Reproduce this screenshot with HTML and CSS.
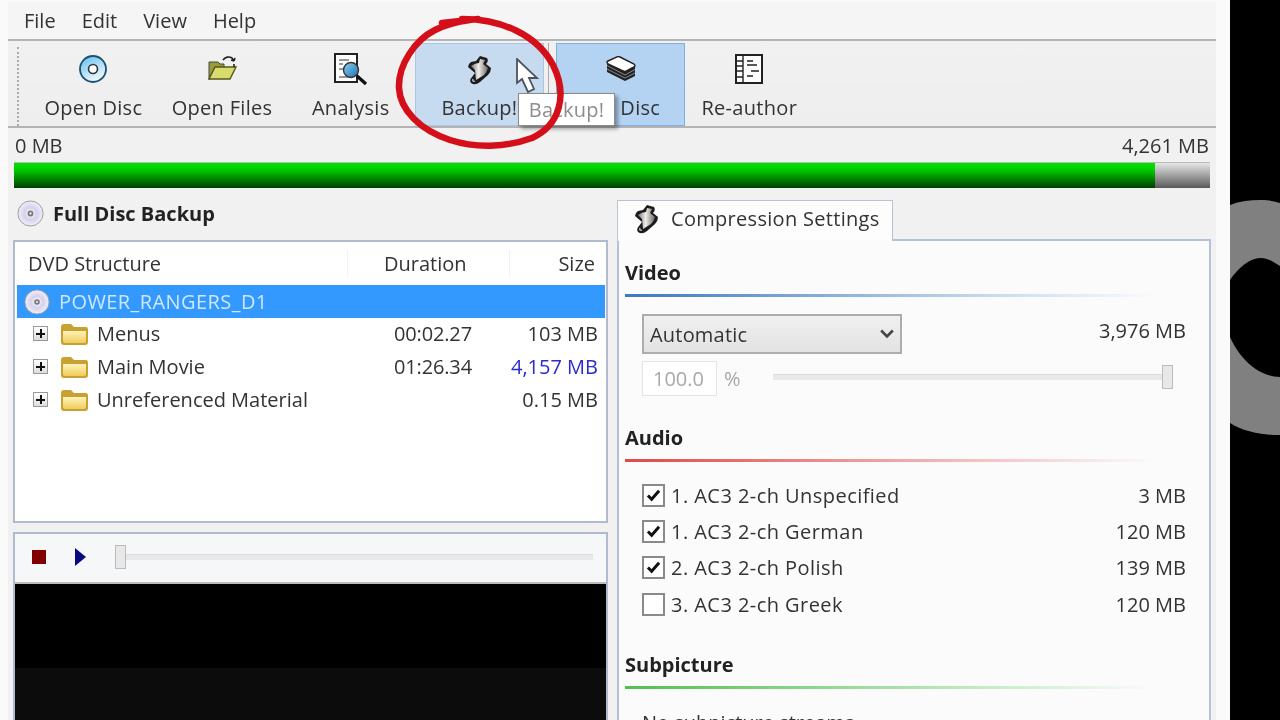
FILE: index.html
```html
<!DOCTYPE html>
<html lang="en">
<head>
<meta charset="utf-8">
<title>DVD Backup</title>
<link rel="stylesheet" href="styles.css">
</head>
<body>
<svg class="defs" width="0" height="0" aria-hidden="true">
  <defs>
    <linearGradient id="folderFill" x1="0" y1="0" x2="0" y2="1"><stop offset="0" stop-color="#fff3b8"/><stop offset="1" stop-color="#f0cc5e"/></linearGradient>
    <linearGradient id="scrollFill" x1="0" y1="0" x2="1" y2="0"><stop offset="0" stop-color="#777"/><stop offset=".45" stop-color="#f0efed"/><stop offset="1" stop-color="#6d655f"/></linearGradient>
    <linearGradient id="discBlue" x1="0" y1="0" x2=".5" y2="1"><stop offset="0" stop-color="#5fbdf0"/><stop offset=".6" stop-color="#b5e0f8"/><stop offset="1" stop-color="#f0f9ff"/></linearGradient>
    <linearGradient id="lens" x1="0" y1="0" x2="1" y2="1"><stop offset="0" stop-color="#8fd0f4"/><stop offset="1" stop-color="#1a6fae"/></linearGradient>
    <radialGradient id="discFill"><stop offset="0" stop-color="#fff"/><stop offset=".5" stop-color="#d6d0ee"/><stop offset="1" stop-color="#f2f0fa"/></radialGradient>
    <symbol id="scroll" viewBox="0 0 24 30">
      <path d="M13 1L20 3Q22 6 19 9L24 13Q24 17 21 20L13 27Q8 31 4 28Q2 25 5 22L8 18 1 12Q1 9 4 7L9 6Z" fill="#1c1c1c"/>
      <path d="M13 4L18 5 16 9 21 13Q20 17 17 20L9 25 8 15 4 11Q8 8 12 8Z" fill="url(#scrollFill)"/>
      <path d="M6 24Q5 27 8 26" fill="none" stroke="#ddd" stroke-width="1.2"/>
    </symbol>
    <symbol id="folder" viewBox="0 0 29 24">
      <path d="M1 5Q1 2 4 2H11L14 5H26Q28 5 28 8V20Q28 23 25 23H4Q1 23 1 20Z" fill="#c9a032"/>
      <path d="M3 9H26V19Q26 21 24 21H5Q3 21 3 19Z" fill="url(#folderFill)"/>
    </symbol>
    <symbol id="disc" viewBox="0 0 28 28">
      <circle cx="14" cy="14" r="13" fill="url(#discFill)" stroke="#9a9a9a"/>
      <circle cx="14" cy="14" r="3" fill="#777"/>
      <circle cx="14" cy="14" r="1.2" fill="#eee"/>
    </symbol>
    <symbol id="tick" viewBox="0 0 16 14">
      <path d="M2 7l4 4 8-9" fill="none" stroke="#111" stroke-width="3.2"/>
    </symbol>
  </defs>
</svg>
<div class="stage">
  <div class="app">
    <div class="window">
      <nav class="menubar">
        <span class="menu-item">File</span><span class="menu-item">Edit</span><span class="menu-item">View</span><span class="menu-item">Help</span>
      </nav>
      <div class="toolbar">
        <div class="grip"></div>
        <div class="tool">
          <svg class="tool-icon" viewBox="0 0 32 32"><circle cx="16" cy="16" r="13" fill="url(#discBlue)" stroke="#1d4f70" stroke-width="1.8"/><circle cx="16" cy="16" r="4.5" fill="#fff" stroke="#333" stroke-width="1.6"/></svg>
          <span>Open Disc</span>
        </div>
        <div class="tool">
          <svg class="tool-icon" viewBox="0 0 32 32"><path d="M3 9h9l2 2h4v4H9L5 26H3z" fill="#9a9c3a" stroke="#444" stroke-width="1"/><path d="M9 14h21l-6 12H3z" fill="#d8dc6c" stroke="#55551c" stroke-width="1.4"/><path d="M17 7c2-3 6-4 9-2 1 1 2 2 2 3M28 8l-3-1M28 8l1-3M28 11v3" fill="none" stroke="#222" stroke-width="1.6"/></svg>
          <span>Open Files</span>
        </div>
        <div class="tool">
          <svg class="tool-icon lens-icon" viewBox="0 0 36 34"><rect x="2" y="2" width="22" height="28" fill="#fff" stroke="#222" stroke-width="2"/><path d="M6 8h10M6 12h4M6 17h4M6 25h10" stroke="#777" stroke-width="1.5"/><circle cx="18" cy="18" r="7.5" fill="url(#lens)" stroke="#333" stroke-width="1.4"/><path d="M24 24l9 8" stroke="#111" stroke-width="3.2"/></svg>
          <span>Analysis</span>
        </div>
        <div class="tool tool-hover">
          <svg class="tool-icon scroll-icon"><use href="#scroll"/></svg>
          <span>Backup!</span>
        </div>
        <div class="sep"></div>
        <div class="tool tool-active">
          <svg class="tool-icon stack-icon" viewBox="0 0 30 25"><path d="M1 6V16L19 25 29 20V10L19 16Z" fill="#222"/><path d="M1 9.5L19 19 29 13.5M1 13L19 22 29 17" fill="none" stroke="#8a8a8a" stroke-width="1"/><path d="M11 1Q12 0 14 1L28 8Q30 10 28 11L20 15Q19 16 17 15L2 8Q0 6 2 5Z" fill="#fff" stroke="#222" stroke-width="1.4"/></svg>
          <span>Full Disc</span>
        </div>
        <div class="tool">
          <svg class="tool-icon" viewBox="0 0 32 32"><rect x="3" y="2" width="26" height="28" fill="#fff" stroke="#222" stroke-width="2"/><path d="M10 2v28M3 8h7M3 13h7M3 18h7M3 24h7" stroke="#222" stroke-width="1.4"/><path d="M14 8h6M14 12h10M18 18h8M14 23h6" stroke="#222" stroke-width="1.7"/></svg>
          <span>Re-author</span>
        </div>
      </div>
      <div class="size-row"><span>0 MB</span><span>4,261 MB</span></div>
      <div class="capacity"><div class="capacity-fill"></div></div>
      <div class="columns">
        <section class="left">
          <h2 class="mode"><svg class="mode-icon"><use href="#disc"/></svg>Full Disc Backup</h2>
          <div class="tree">
            <div class="tree-head">
              <span class="c-name">DVD Structure</span><span class="c-dur">Duration</span><span class="c-size">Size</span>
            </div>
            <div class="tree-root"><svg class="root-icon"><use href="#disc"/></svg>POWER_RANGERS_D1</div>
            <div class="tree-row"><span class="plus"></span><svg class="folder"><use href="#folder"/></svg><span class="c-label">Menus</span><span class="c-d">00:02.27</span><span class="c-s">103 MB</span></div>
            <div class="tree-row"><span class="plus"></span><svg class="folder"><use href="#folder"/></svg><span class="c-label">Main Movie</span><span class="c-d">01:26.34</span><span class="c-s link">4,157 MB</span></div>
            <div class="tree-row"><span class="plus"></span><svg class="folder"><use href="#folder"/></svg><span class="c-label">Unreferenced Material</span><span class="c-d"></span><span class="c-s">0.15 MB</span></div>
          </div>
          <div class="player">
            <div class="player-bar">
              <span class="stop"></span>
              <svg class="play" viewBox="0 0 12 18"><path d="M1 0L12 9 1 18z" fill="#0a0a80"/></svg>
              <div class="track seek"><span class="thumb"></span></div>
            </div>
            <div class="screen"></div>
          </div>
        </section>
        <section class="right">
          <div class="tab"><svg class="tab-icon"><use href="#scroll"/></svg>Compression Settings</div>
          <div class="panel">
            <h3 class="sec">Video</h3>
            <div class="rule rule-blue"></div>
            <div class="video-row">
              <div class="select"><span>Automatic</span><svg class="chev" viewBox="0 0 12 8"><path d="M1 1l5 5 5-5" fill="none" stroke="#444" stroke-width="2.2"/></svg></div>
              <span class="mb">3,976 MB</span>
            </div>
            <div class="quality">
              <span class="pct-box">100.0</span><span class="pct">%</span>
              <div class="track quality-track"><span class="thumb"></span></div>
            </div>
            <h3 class="sec sec-audio">Audio</h3>
            <div class="rule rule-red"></div>
            <ul class="audio">
              <li><span class="check"><svg><use href="#tick"/></svg></span><span class="audio-name">1. AC3 2-ch Unspecified</span><span>3 MB</span></li>
              <li><span class="check"><svg><use href="#tick"/></svg></span><span class="audio-name">1. AC3 2-ch German</span><span>120 MB</span></li>
              <li><span class="check"><svg><use href="#tick"/></svg></span><span class="audio-name">2. AC3 2-ch Polish</span><span>139 MB</span></li>
              <li><span class="check"></span><span class="audio-name">3. AC3 2-ch Greek</span><span>120 MB</span></li>
            </ul>
            <h3 class="sec sec-sub">Subpicture</h3>
            <div class="rule rule-green"></div>
            <p class="none">No subpicture streams</p>
          </div>
        </section>
      </div>
    </div>
    <div class="tooltip">Backup!</div>
    <svg class="cursor" viewBox="0 0 24 36"><path d="M1 1V25L6 21 12 34 18 31 13 20H21Z" fill="#fff" stroke="#4c5260" stroke-width="1.8"/></svg>
    <svg class="scribble" viewBox="0 0 180 145"><path d="M52 13L88 9M72 9C112 9 147 25 163 55 178 85 170 115 142 128 115 138 85 138 60 130 30 120 10 100 9 78 8 55 25 30 45 20 55 15 65 12 80 10" fill="none" stroke="#d40f1a" stroke-width="6.5" stroke-linecap="round"/></svg>
  </div>
  <div class="backdrop">
    <svg class="ring" viewBox="0 0 50 720"><path d="M0 205C10 201 20 200 30 200 38 200 44 201 50 203V435C30 435 12 431 0 423Z" fill="#808080"/><path d="M0 280C8 268 20 258 30 258 38 258 44 262 50 266V377C30 377 10 360 0 337Z" fill="#000"/></svg>
  </div>
</div>
</body>
</html>
```

FILE: styles.css
```css
* { box-sizing: border-box; }
html, body { margin: 0; padding: 0; }
body { width: 1280px; height: 720px; overflow: hidden; background: #000; font-family: "Open Sans", "Liberation Sans", sans-serif; font-size: 20px; color: #333; }
.defs { position: absolute; }
.stage { display: flex; width: 1280px; height: 720px; overflow: hidden; filter: blur(.45px); }
.app { position: relative; width: 1230px; height: 720px; flex: none; background: #fafafa; padding: 2px 14px 0 8px; overflow: hidden; }
.window { height: 718px; background: #f1f1f1; }
.backdrop { flex: 1; background: #000; }
.ring { display: block; width: 50px; height: 720px; }

.menubar { display: flex; height: 39px; align-items: center; padding-left: 16px; gap: 26px; background: #f5f5f5; border-bottom: 2px solid #b4b4b4; }
.toolbar { display: flex; height: 87px; align-items: stretch; background: linear-gradient(#f1f1f1, #eeeeee); border-bottom: 2px solid #b4b4b4; padding-top: 2px; }
.grip { width: 5px; margin: 4px 0 0 9px; border-left: 2px dotted #aaa; flex: none; }
.tool { display: flex; flex-direction: column; align-items: center; width: 128.7px; flex: none; padding-top: 9px; border: 1px solid transparent; letter-spacing: .3px; }
.tool span { margin-top: 10px; line-height: 26px; }
.tool-icon { width: 32px; height: 32px; display: block; flex: none; }
.lens-icon { width: 36px; height: 34px; margin: -1px 0 -1px; }
.scroll-icon { width: 24px; height: 30px; margin-top: 2px; }
.stack-icon { width: 30px; height: 25px; margin: 3px 0 4px; }
.tool-hover { background: #c6daf0; border-color: #a9c6e6; }
.tool-active { background: #b4d2f2; border-color: #7fb0e0; }
.grip + .tool { margin-left: 7px; }
.sep { width: 12.5px; background: linear-gradient(90deg, transparent 4px, #aaa 4px, #aaa 5px, transparent 5px); flex: none; }

.size-row { display: flex; justify-content: space-between; height: 34px; align-items: center; padding: 0 7px 0 7px; }
.capacity { margin: 0 6px; height: 26px; background: linear-gradient(#e6e6e6, #5a5a5a); border-top: 1px solid #bbb; }
.capacity-fill { width: 1141px; height: 100%; background: linear-gradient(#00e000, #00d000 25%, #003c00); }

.columns { display: grid; grid-template-columns: 594px 594px; column-gap: 9px; margin-left: 6px; }
.mode { display: flex; align-items: center; margin: 0; height: 52px; font-size: 20px; font-weight: 700; color: #222; padding: 0 0 2px 3px; gap: 9px; }
.mode-icon { width: 27px; height: 27px; }
.tree { height: 283px; background: #fff; border: 2px solid #b0bccd; padding: 2px 0 0 1px; margin-left: -1px; }
.tree-head { display: flex; height: 41px; align-items: center; padding: 0 11px 3px 12px; }
.c-name { width: 319px; }
.c-dur { width: 163px; padding-left: 36px; border-left: 1px solid #f2f2f2; border-right: 1px solid #f2f2f2; }
.c-size { flex: 1; text-align: right; }
.tree-root { display: flex; align-items: center; gap: 9px; height: 33px; background: #3399ff; color: #cfe6ff; padding-left: 7px; margin: 0 1px 0 1px; letter-spacing: .42px; }
.root-icon { width: 26px; height: 26px; }
.tree-row { display: flex; align-items: center; height: 33px; padding: 0 8px 2px 17px; }
.plus { position: relative; width: 15px; height: 15px; border: 1px solid #999; background: linear-gradient(#fff, #ddd); flex: none; margin-right: 12px; }
.plus::before { content: ""; position: absolute; left: 2px; right: 2px; top: 6px; height: 1.5px; background: #111; }
.plus::after { content: ""; position: absolute; top: 2px; bottom: 2px; left: 6px; width: 1.5px; background: #111; }
.folder { width: 29px; height: 24px; flex: none; margin-right: 8px; }
.c-label { width: 297px; flex: none; }
.c-d { width: 100px; flex: none; letter-spacing: -.15px; }
.c-s { flex: 1; text-align: right; }
.link { color: #2a2ad0; }

.player { margin: 9px 0 0 -1px; height: 200px; background: #f6f7f9; border: 2px solid #b0bccd; border-bottom: 0; }
.player-bar { display: flex; align-items: center; height: 50px; padding: 0 0 2px 17px; border-bottom: 2px solid #bcbcbc; }
.stop { width: 14px; height: 14px; background: #800000; flex: none; }
.play { width: 12px; height: 18px; margin-left: 28px; flex: none; }
.track { position: relative; height: 6px; background: #e8e8e8; border-top: 1px solid #dcdcdc; }
.seek { flex: none; width: 478px; margin-left: 29px; }
.thumb { position: absolute; width: 11px; height: 24px; top: -10px; background: #e8e8e8; border: 1px solid #bcbcbc; }
.seek .thumb { left: 0; }
.screen { height: 150px; background: linear-gradient(#000 84px, #0c0c0c 84px); }

.right { padding-top: 12px; }
.tab { display: flex; align-items: center; width: 276px; height: 41px; background: #fdfdfd; border: 1px solid #b9c3d0; border-bottom: 0; padding: 0 0 5px 16px; gap: 13px; position: relative; z-index: 1; margin-bottom: -2px; letter-spacing: .3px; }
.tab-icon { width: 24px; height: 30px; }
.panel { height: 490px; background: #fbfbfc; border: 2px solid #b3c2d6; padding: 19px 6px 0 6px; overflow: hidden; }
.sec { margin: 0; font-size: 20px; font-weight: 700; color: #222; line-height: 26px; height: 26px; }
.rule { height: 3px; margin-top: 8px; width: 530px; }
.rule-blue { background: linear-gradient(90deg, #3c78c0, #c8dcf0 70%, transparent); }
.rule-red { background: linear-gradient(90deg, #e04848, #f4c8c8 70%, transparent); }
.rule-green { background: linear-gradient(90deg, #50c050, #c8ecc8 70%, transparent); }
.video-row { display: flex; justify-content: space-between; margin-top: 17px; padding: 0 17px; height: 40px; }
.select { display: flex; align-items: center; justify-content: space-between; width: 260px; height: 40px; background: linear-gradient(#f0f0f0, #e2e2e2); border: 2px solid #adadad; padding: 0 6px; letter-spacing: .2px; }
.chev { width: 14px; height: 10px; }
.mb { margin-top: -2px; line-height: 38px; }
.quality { display: flex; align-items: center; margin-top: 7px; padding-left: 17px; height: 35px; color: #a8a8a8; }
.pct-box { width: 75px; height: 35px; line-height: 33px; padding-left: 10px; background: #fff; border: 1px solid #e4e4e4; }
.pct { margin-left: 7px; }
.quality-track { width: 400px; margin: -4px 0 0 32px; }
.quality-track .thumb { right: 0; }
.sec-audio { margin-top: 29px; }
.audio { list-style: none; margin: 15px 0 0; padding: 0 17px; }
.audio li { display: flex; align-items: center; height: 36.4px; }
.check { width: 23px; height: 23px; border: 2px solid #8a8a8a; background: #fff; flex: none; margin-right: 6px; display: flex; align-items: center; justify-content: center; }
.check svg { width: 15px; height: 13px; }
.audio-name { flex: 1; letter-spacing: .45px; }
.sec-sub { margin-top: 29px; }
.none { margin: 20px 0 0 17px; }

.tooltip { position: absolute; left: 518px; top: 93px; width: 97px; height: 33px; background: #fff; border: 1px solid #8a8a8a; box-shadow: 3px 3px 4px rgba(0,0,0,.35); text-align: center; line-height: 31px; color: #8d8d8d; letter-spacing: .2px; }
.cursor { position: absolute; left: 516px; top: 58px; width: 24px; height: 36px; }
.scribble { position: absolute; left: 390px; top: 10px; width: 180px; height: 145px; }
```
